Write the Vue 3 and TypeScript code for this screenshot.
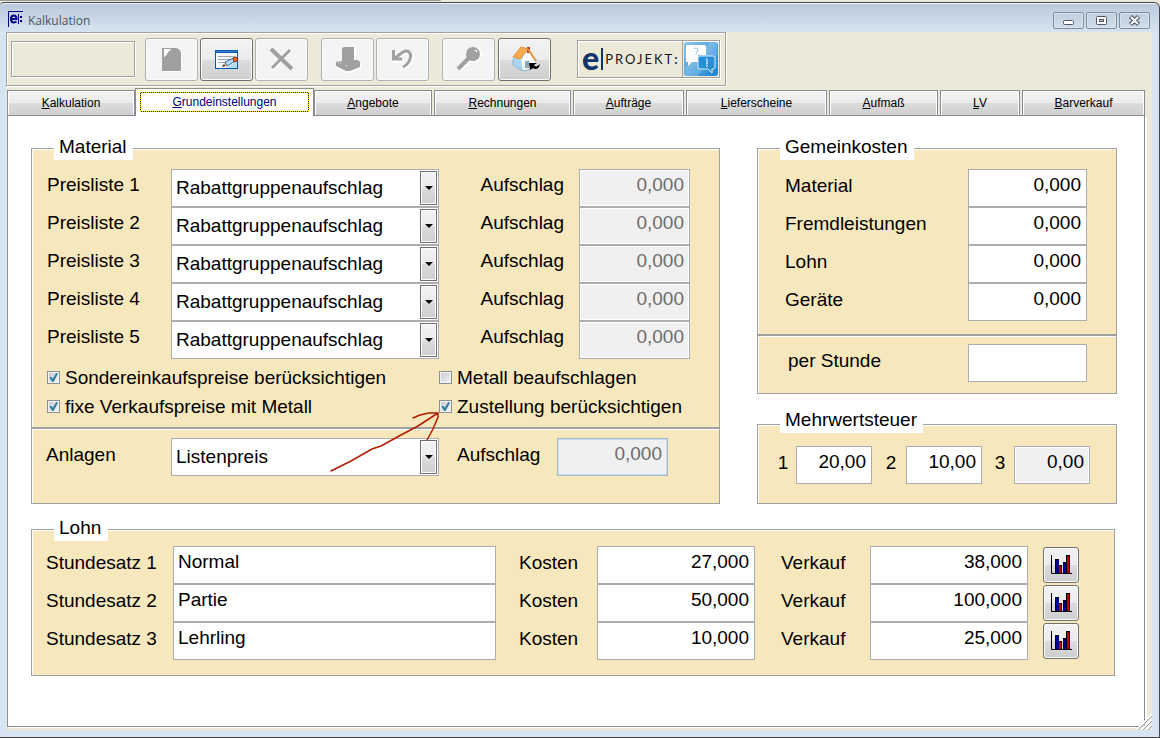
<script setup lang="ts">
import { ref } from 'vue'

interface Tab { key: string; rest: string }
interface PriceList { id: number; mode: string; surcharge: string }
interface Overhead { id: string; label: string; value: string }
interface Tax { id: number; value: string; locked: boolean }
interface Wage { id: number; name: string; cost: string; sale: string }

const tabs: Tab[] = [
  { key: 'K', rest: 'alkulation' },
  { key: 'G', rest: 'rundeinstellungen' },
  { key: 'A', rest: 'ngebote' },
  { key: 'R', rest: 'echnungen' },
  { key: 'A', rest: 'ufträge' },
  { key: 'L', rest: 'ieferscheine' },
  { key: 'A', rest: 'ufmaß' },
  { key: 'L', rest: 'V' },
  { key: 'B', rest: 'arverkauf' },
]
const activeTab = ref(1)

const modes = ['Rabattgruppenaufschlag', 'Listenpreis']
const priceLists = ref<PriceList[]>(
  [1, 2, 3, 4, 5].map((id) => ({ id, mode: 'Rabattgruppenaufschlag', surcharge: '0,000' })),
)
const plantMode = ref('Listenpreis')
const plantSurcharge = ref('0,000')

const specialPrices = ref(true)
const metalSurcharge = ref(false)
const fixedPrices = ref(true)
const delivery = ref(true)

const overheads = ref<Overhead[]>([
  { id: 'material', label: 'Material', value: '0,000' },
  { id: 'fremd', label: 'Fremdleistungen', value: '0,000' },
  { id: 'lohn', label: 'Lohn', value: '0,000' },
  { id: 'geraete', label: 'Geräte', value: '0,000' },
])
const perHour = ref('')

const taxes = ref<Tax[]>([
  { id: 1, value: '20,00', locked: false },
  { id: 2, value: '10,00', locked: false },
  { id: 3, value: '0,00', locked: true },
])

const wages = ref<Wage[]>([
  { id: 1, name: 'Normal', cost: '27,000', sale: '38,000' },
  { id: 2, name: 'Partie', cost: '50,000', sale: '100,000' },
  { id: 3, name: 'Lehrling', cost: '10,000', sale: '25,000' },
])
</script>

<template>
  <div class="desktop">
    <div class="window">
      <header class="titlebar">
        <svg class="app-icon" viewBox="0 0 16 16" aria-hidden="true">
          <path d="M.5 16V.5H15" fill="none" stroke="#000080" />
          <path d="M3 8h5.500C8.500 5.500 7.500 4.500 5.700 4.500S3 6 3 8s1.200 3.500 3 3.500 2-.5 2.500-1" fill="none" stroke="#000080" stroke-width="2" />
          <path d="M10.500 3v10" stroke="#000080" /><path d="M12 5h2v2h-2zM12 9h2v2h-2z" fill="#000080" />
        </svg>
        <h1>Kalkulation</h1>
        <div class="window-buttons">
          <button type="button" aria-label="Minimieren">
            <svg viewBox="0 0 29 15"><rect x="9.500" y="7.500" width="10" height="4" rx="1" fill="#fff" stroke="#535666" /></svg>
          </button>
          <button type="button" aria-label="Maximieren">
            <svg viewBox="0 0 29 15"><rect x="9.500" y="3.500" width="10" height="8" rx="1" fill="#fff" stroke="#535666" /><rect x="12.500" y="6.500" width="4" height="2" fill="#bccbda" stroke="#535666" /></svg>
          </button>
          <button type="button" aria-label="Schließen">
            <svg viewBox="0 0 29 15"><path d="M10.500 3.500l8 8M18.500 3.500l-8 8" stroke="#535666" stroke-width="4.500" /><path d="M11 4l7 7M18 4l-7 7" stroke="#fff" stroke-width="2.200" /></svg>
          </button>
        </div>
      </header>

      <div class="client">
        <div class="toolbar" role="toolbar" aria-label="Werkzeuge">
          <div class="status"></div>
          <div class="tool-group">
            <button type="button" class="tool" disabled aria-label="Neu">
              <svg viewBox="0 0 32 32"><path d="M7 5h16l3 4v20H7z" fill="#fff" /><path d="M6 5h15l1 1h1l2 3v19H6z" fill="#a0a0a0" /><path d="M8 6h7v1h-1v1h-1v1h-1v1h-1v2h-1v1H9v1H8z" fill="#fff" /></svg>
            </button>
            <button type="button" class="tool" aria-label="Bearbeiten">
              <svg viewBox="0 0 32 32">
                <rect x="4" y="7" width="23" height="19" fill="#0a57a8" /><path d="M5 8.500h21" stroke="#2f83cf" />
                <rect x="5" y="10" width="21" height="15" fill="#f4f8fc" />
                <path d="M7 13.500h17M7 16.500h14M7 19.500h8" stroke="#9aa4ac" />
                <path d="M15 25l11-7v7z" fill="#b9dcf3" />
                <path d="M11 24l3-5 3 4z" fill="#e9b983" /><path d="M11 24l2-3 1 2z" fill="#222" />
                <path d="M14 19l9-4 1 3-8 5z" fill="#b8dcf5" stroke="#376da0" />
                <path d="M22 15l3-1 2 2-1 2-3 1z" fill="#e66a28" stroke="#8c2c12" />
              </svg>
            </button>
            <button type="button" class="tool" disabled aria-label="Löschen">
              <svg viewBox="0 0 32 32"><path d="M6 7L27 27M25 8L7 26" stroke="#fff" stroke-width="3" /><path d="M5 6L26 26" stroke="#a0a0a0" stroke-width="4" /><path d="M24 7L6 25" stroke="#a0a0a0" stroke-width="3" /></svg>
            </button>
          </div>
          <div class="tool-group">
            <button type="button" class="tool" disabled aria-label="Ablegen">
              <svg viewBox="0 0 32 32"><path d="M11 5h13v13l5 1v7l-11 4h-2L4 25v-6l7-3z" fill="#fff" /><path d="M10 5l2-1h10v13h4l2 2v5l-10 4h-4L4 23v-4l3-1h3z" fill="#a0a0a0" /><path d="M8 20h1M14 23h1M6 19h1" stroke="#fff" /></svg>
            </button>
            <button type="button" class="tool" disabled aria-label="Rückgängig">
              <svg viewBox="0 0 32 32"><g fill="none"><path d="M7 8v10h10M8 17l9-7c6-3 10 2 8 7-1 4-3 6-7 8" stroke="#fff" stroke-width="3" /><path d="M6.500 7v9H15M8 15l8-6c6-3 9 2 7 7-1 4-3 6-7 8" stroke="#a0a0a0" stroke-width="3" /></g></svg>
            </button>
          </div>
          <div class="tool-group">
            <button type="button" class="tool" disabled aria-label="Suchen">
              <svg viewBox="0 0 32 32"><path d="M6 27l11-11" stroke="#fff" stroke-width="5" /><circle cx="21" cy="11.500" r="7.500" fill="#fff" /><path d="M5 26L16 15" stroke="#a0a0a0" stroke-width="4" /><circle cx="20" cy="11" r="7" fill="#a0a0a0" /><path d="M21.500 7.500h2v2" fill="none" stroke="#fff" /></svg>
            </button>
            <button type="button" class="tool" aria-label="Startseite">
              <svg viewBox="0 0 32 32">
                <path d="M4 15l8-7 4 10v10l-6-2-6-4z" fill="#a8d6f0" /><path d="M12 17l7-9 7 9v8l-12 3z" fill="#f7fafc" /><path d="M4 16v6l6 4 5 2 10-3" fill="none" stroke="#8db4cb" />
                <path d="M18 4h3v6h-3z" fill="#b5382a" /><path d="M4 14l8-10 7 2-8 10z" fill="#f6a84d" stroke="#e5933b" />
                <path d="M19 6l8 12" stroke="#e5933b" stroke-width="2" />
                <path d="M16 18h4v7h-4z" fill="#92a7b4" />
                <path d="M20 20h8l-3 2c1 2 3 2 6-1-1 5-4 6-7 4l-3 2z" fill="#000" />
              </svg>
            </button>
          </div>
          <div class="brand">
            <b class="brand-e">e</b>
            <span class="brand-name">PROJEKT<b>:</b></span>
            <svg viewBox="0 0 36 36" aria-hidden="true">
              <defs><linearGradient id="brandBlue" x1="0" y1="0" x2="1" y2="1"><stop offset="0" stop-color="#8cc4ea" /><stop offset="1" stop-color="#1986d2" /></linearGradient></defs>
              <rect x="1" y="1" width="34" height="34" rx="3" fill="url(#brandBlue)" />
              <path d="M1 28L28 1h6v13L14 35H3z" fill="#fff" opacity=".18" />
              <path d="M4 4h17q2 0 2 2v8h-8v7H9l-4 4v-4H3V6q0-2 1-2z" fill="#fff" />
              <path d="M17 15h13q2 0 2 2v9q0 2-2 2h-1v4l-4-4h-8q-2 0-2-2v-9q0-2 2-2z" fill="#268fd7" stroke="#d6ecfa" />
              <path d="M11 8q0-1 2-1t2 2q0 1-2 3M13 13v1" fill="none" stroke="#83c1e6" /><path d="M23 18h1v5h-1M23 25h2" fill="none" stroke="#fff" />
            </svg>
          </div>
        </div>

        <div class="tabs" role="tablist">
          <button
            v-for="(tab, i) in tabs"
            :key="i"
            type="button"
            role="tab"
            class="tab"
            :class="{ active: i === activeTab }"
            :aria-selected="i === activeTab"
            @click="activeTab = i"
          ><span><u>{{ tab.key }}</u>{{ tab.rest }}</span></button>
        </div>

        <main class="panel" role="tabpanel">
          <div class="upper">
            <fieldset class="group">
              <legend>Material</legend>
              <div class="material">
                <div v-for="p in priceLists" :key="p.id" class="price-row">
                  <label :for="`liste-${p.id}`">Preisliste {{ p.id }}</label>
                  <div class="combo">
                    <select :id="`liste-${p.id}`" v-model="p.mode"><option v-for="m in modes" :key="m">{{ m }}</option></select>
                    <span class="combo-arrow"></span>
                  </div>
                  <label class="surcharge-label" :for="`aufschlag-${p.id}`">Aufschlag</label>
                  <input :id="`aufschlag-${p.id}`" v-model="p.surcharge" class="field number" disabled />
                </div>
                <div class="checks">
                  <label class="check"><input v-model="specialPrices" type="checkbox" />Sondereinkaufspreise berücksichtigen</label>
                  <label class="check"><input v-model="metalSurcharge" type="checkbox" />Metall beaufschlagen</label>
                  <label class="check"><input v-model="fixedPrices" type="checkbox" />fixe Verkaufspreise mit Metall</label>
                  <label class="check"><input v-model="delivery" type="checkbox" />Zustellung berücksichtigen</label>
                </div>
              </div>
              <div class="section plant">
                <label for="anlagen">Anlagen</label>
                <div class="combo">
                  <select id="anlagen" v-model="plantMode"><option v-for="m in modes" :key="m">{{ m }}</option></select>
                  <span class="combo-arrow"></span>
                </div>
                <label for="anlagen-aufschlag">Aufschlag</label>
                <input id="anlagen-aufschlag" v-model="plantSurcharge" class="field number highlighted" disabled />
                <svg class="pointer" viewBox="0 0 112 62" aria-hidden="true">
                  <path d="M2 60l20-10 21-12 9-3 20-11 17-9 20-13M84 7l7-3 9-2 9 0 0 4-5 12-6 11" />
                </svg>
              </div>
            </fieldset>

            <div class="side">
              <fieldset class="group">
                <legend>Gemeinkosten</legend>
                <div class="overheads">
                  <div v-for="o in overheads" :key="o.id" class="overhead-row">
                    <label :for="o.id">{{ o.label }}</label>
                    <input :id="o.id" v-model="o.value" class="field number" />
                  </div>
                </div>
                <div class="section per-hour">
                  <label for="stunde">per Stunde</label>
                  <input id="stunde" v-model="perHour" class="field number" />
                </div>
              </fieldset>

              <fieldset class="group tax">
                <legend class="raised">Mehrwertsteuer</legend>
                <div class="tax-row">
                  <template v-for="t in taxes" :key="t.id">
                    <label :for="`mwst-${t.id}`">{{ t.id }}</label>
                    <input :id="`mwst-${t.id}`" v-model="t.value" class="field number" :class="{ locked: t.locked }" :readonly="t.locked" />
                  </template>
                </div>
              </fieldset>
            </div>
          </div>

          <fieldset class="group wages">
            <legend>Lohn</legend>
            <div v-for="w in wages" :key="w.id" class="wage-row">
              <label :for="`satz-${w.id}`">Stundesatz {{ w.id }}</label>
              <input :id="`satz-${w.id}`" v-model="w.name" class="field" />
              <label class="cost-label" :for="`kosten-${w.id}`">Kosten</label>
              <input :id="`kosten-${w.id}`" v-model="w.cost" class="field number" />
              <label class="sale-label" :for="`verkauf-${w.id}`">Verkauf</label>
              <input :id="`verkauf-${w.id}`" v-model="w.sale" class="field number" />
              <button type="button" class="chart" :aria-label="`Diagramm Stundesatz ${w.id}`">
                <svg viewBox="0 0 22 20">
                  <path d="M1.500 0v18.500H22" fill="none" stroke="#000" />
                  <path d="M5 4h4v14H5zM13 7h4v11h-4z" fill="#000" /><path d="M6 5h3v13H6zM14 8h2v10h-2z" fill="#000090" />
                  <path d="M9 10h3v8H9zM16 0h4v18h-4z" fill="#000" /><path d="M9 11h2v7H9zM17 1h2v17h-2z" fill="#c00000" />
                </svg>
              </button>
            </div>
          </fieldset>
        </main>
        <svg class="grip" viewBox="0 0 16 16" aria-hidden="true"><path d="M1 16L16 1M6 16L16 6M11 16l5-5" stroke="#fff" stroke-width="3" /><path d="M2 16L16 2M7 16l9-9M12 16l4-4" stroke="#8f8f94" /></svg>
      </div>
    </div>
  </div>
</template>

<style>
body { margin: 0; }
</style>

<style scoped>
* { box-sizing: border-box; }
.desktop {
  display: flex;
  flex-direction: column;
  min-height: 100vh;
  padding-top: 2px;
  background: linear-gradient(#9a9a9a, #9a9a9a) 0 0 / 38% 1px no-repeat, #ece9d8;
  font-family: "Liberation Sans", Arial, sans-serif;
  color: #000;
}
.window {
  display: flex;
  flex: 1;
  flex-direction: column;
  padding: 0 7px 7px 6px;
  border: solid #45474f;
  border-width: 1px 1px 1px 0;
  border-radius: 4px 6px 0 0;
  background: linear-gradient(#b9cadb, #d7e4f2 30px, #d7e4f2);
  box-shadow: inset 0 1px #eef4fa;
}
button { padding: 0; font: inherit; color: inherit; }
.titlebar { display: flex; align-items: center; height: 29px; padding: 6px 2px 0; gap: 4px; }
.app-icon { width: 16px; height: 16px; margin-bottom: 4px; }
h1 {
  flex: 1;
  margin: 0;
  font: 12px/18px "Open Sans", "Noto Sans", sans-serif;
  color: #4c5560;
}
.window-buttons { display: flex; gap: 2px; }
.window-buttons button {
  width: 31px;
  height: 17px;
  border: 1px solid #7f8c9c;
  border-radius: 2px;
  background: linear-gradient(#c0cfde, #d0deeb);
  box-shadow: inset 0 0 0 1px #d9e4ee;
}
.window-buttons svg { display: block; width: 29px; height: 15px; }

.client {
  position: relative;
  display: flex;
  flex: 1;
  flex-direction: column;
  padding: 0 7px 3px 1px;
  background: #ece9d8;
}
.toolbar {
  display: flex;
  align-items: center;
  align-self: flex-start;
  height: 54px;
  margin-left: -1px;
  padding: 0 5px 0 4px;
  border: 1px solid #a0a0a0;
  box-shadow: inset 1px 1px #fff, 1px 1px #fff;
}
.status {
  width: 124px;
  height: 36px;
  margin-right: 10px;
  border: 1px solid #a0a0a0;
  box-shadow: inset 1px 1px #fff, 1px 1px #fff;
}
.tool-group { display: flex; gap: 2px; margin-right: 13px; }
.tool-group:nth-of-type(4) { gap: 3px; }
.tool {
  display: grid;
  place-items: center;
  width: 53px;
  height: 43px;
  border: 1px solid #707070;
  border-radius: 3px;
  background: linear-gradient(#f3f3f3, #ebebeb 50%, #dcdcdc 50%, #cecece);
  box-shadow: inset 0 0 0 1px #fbfbfb;
}
.tool:disabled { border-color: #adb2b5; background: #f4f4f4; }
.tool svg { width: 32px; height: 32px; }
.brand {
  display: flex;
  align-items: center;
  width: 143px;
  height: 38px;
  margin-left: 13px;
  padding-left: 4px;
  border: 1px solid #a0a0a0;
  box-shadow: inset 1px 1px #fff, 1px 1px #fff;
  color: #123469;
}
.brand-e {
  height: 22px;
  padding-right: 2px;
  border-right: 2px solid #123469;
  font: 900 32px/20px Lato, sans-serif;
}
.brand-name {
  flex: 1;
  padding-left: 2px;
  font: 13px/20px Lato, sans-serif;
  letter-spacing: 2px;
  color: #15171c;
}
.brand-name b { color: #123469; }
.brand svg { flex: none; width: 37px; height: 36px; border-left: 1px solid #a0a0a0; }

.tabs {
  display: grid;
  grid-template-columns: 128fr 179fr 120fr 139fr 113fr 143fr 111fr 82fr 123fr;
  height: 28px;
  margin-top: 2px;
  box-shadow: inset 0 -1px #898c95;
}
.tab {
  margin: 2px 2px 0 0;
  border: 1px solid #898c95;
  background: linear-gradient(#f3f3f3, #ebebeb 50%, #dcdcdc 50%, #cfcfcf);
  box-shadow: inset 1px 1px #fff, inset -1px 0 #fff;
  font-size: 12px;
}
.tab:first-child, .tab:last-child { margin-right: 0; }
.tab.active {
  margin: 0;
  padding: 3px 4px 4px;
  border-bottom: 0;
  background: #fff;
  color: #000080;
}
.tab.active span {
  --dots: #ffe100 0 1px, #222 1px 2px;
  display: block;
  padding: 1px;
  background:
    repeating-linear-gradient(90deg, var(--dots)) top / 100% 1px no-repeat,
    repeating-linear-gradient(90deg, var(--dots)) bottom / 100% 1px no-repeat,
    repeating-linear-gradient(180deg, var(--dots)) left / 1px 100% no-repeat,
    repeating-linear-gradient(180deg, var(--dots)) right / 1px 100% no-repeat;
  line-height: 18px;
}

.panel {
  flex: 1;
  padding: 20px 27px 48px 23px;
  border: 1px solid #898c95;
  border-top: 0;
  background: #fff;
  box-shadow: 2px 1px #fff;
  font-size: 19px;
}
.upper { display: grid; grid-template-columns: minmax(0, 1fr) 360px; gap: 37px; }
.group {
  min-width: 0;
  margin: 0;
  padding: 0;
  border: 1px solid #a0a0a0;
  background: #f6e7bc;
  box-shadow: inset 1px 1px #fff;
}
legend { position: relative; margin-left: 22px; padding: 0 6px 2px 5px; line-height: 22px; background: #fff; }
legend.raised { padding-bottom: 8px; line-height: 10px; }
label { line-height: 31px; white-space: nowrap; }

.field, select {
  width: 100%;
  min-width: 0;
  height: 38px;
  margin: 0;
  border: 1px solid #abadb3;
  border-radius: 0;
  background: #fff;
  color: #000;
  font: 19px "Liberation Sans", Arial, sans-serif;
}
.field { padding: 0 5px 6px 4px; }
.number { text-align: right; }
.field:disabled, .field.locked { background: #f0f0f0; box-shadow: inset 0 0 0 1px #fff; }
.field:disabled { color: #6d6d6d; }
.field.highlighted { border-color: #a5b9cb; box-shadow: inset 0 0 0 1px #c5dcea; }
.combo { position: relative; }
select { display: block; padding: 0 22px 2px 4px; appearance: none; outline: 0; }
.combo-arrow {
  position: absolute;
  inset: 2px 2px 2px auto;
  display: grid;
  place-items: center;
  width: 17px;
  border: 1px solid #707070;
  background: linear-gradient(#f3f3f3, #ebebeb 50%, #dcdcdc 50%, #cecece);
  box-shadow: inset 0 0 0 1px #fbfbfb;
  pointer-events: none;
}
.combo-arrow::after { content: ""; border: 4px solid transparent; border-top-color: #000; border-bottom: 0; }

.material { padding: 9px 29px 6px 15px; }
.price-row { display: grid; grid-template-columns: 124px minmax(0, 268px) 1fr 111px; }
.surcharge-label { padding-right: 15px; text-align: right; }
.checks { display: grid; grid-template-columns: 392px 1fr; grid-auto-rows: 29px; margin-top: 4px; }
.check { display: flex; align-items: center; gap: 5px; line-height: 29px; }
.check input {
  position: relative;
  flex: none;
  width: 13px;
  height: 13px;
  margin: 0;
  appearance: none;
  border: 1px solid #8e8f8f;
  background: linear-gradient(135deg, #c3c8cd, #f6f6f6);
  box-shadow: inset 0 0 0 1px #f4f4f4;
}
.check input:checked::after {
  content: "";
  position: absolute;
  inset: 1px;
  background: #2f7ba8;
  clip-path: polygon(5% 50%, 25% 42%, 42% 65%, 80% 0, 100% 5%, 50% 100%, 36% 100%);
}
.section { border-top: 2px solid #a0a0a0; box-shadow: inset 0 1px #fff; }
.plant {
  position: relative;
  display: grid;
  grid-template-columns: 125px minmax(0, 268px) 118px 111px;
  padding: 9px 15px 26px 14px;
}
.plant label { line-height: 33px; }
.plant label:nth-of-type(2) { padding-left: 18px; }
.pointer { position: absolute; top: -18px; left: 297px; width: 112px; height: 62px; pointer-events: none; }
.pointer path { fill: none; stroke: #b01c00; stroke-width: 1.5; stroke-linecap: round; }

.overheads { padding: 9px 29px 13px 27px; }
.overhead-row, .per-hour { display: grid; grid-template-columns: 1fr 119px; }
.overhead-row label { line-height: 33px; }
.per-hour { padding: 8px 29px 11px 30px; }
.per-hour label { line-height: 33px; }
.tax { margin-top: 21px; }
.tax-row { display: grid; grid-template-columns: 30px 76px 34px 76px 32px 76px; padding: 13px 8px 19px; text-align: center; }
.tax-row label { padding-left: 4px; line-height: 33px; }

.wages { margin: 13px 2px 0 0; }
.wages legend { padding-right: 7px; }
.wage-row {
  display: grid;
  grid-template-columns: 127px minmax(0, 1fr) 101px 158px 115px 158px 51px;
  padding: 0 35px 0 14px;
}
.wage-row:first-of-type { margin-top: 5px; }
.wage-row:last-of-type { margin-bottom: 15px; }
.wage-row label { line-height: 33px; }
.cost-label { padding-left: 23px; }
.sale-label { padding-left: 26px; }
.chart {
  display: grid;
  place-items: center;
  width: 36px;
  height: 36px;
  margin: 1px 0 1px 15px;
  border: 1px solid #707070;
  border-radius: 3px;
  background: linear-gradient(#f3f3f3, #ebebeb 50%, #dcdcdc 50%, #cecece);
  box-shadow: inset 0 0 0 1px #fbfbfb;
}
.chart svg { width: 22px; height: 20px; }
.grip { position: absolute; right: 0; bottom: 0; width: 16px; height: 16px; }
</style>
